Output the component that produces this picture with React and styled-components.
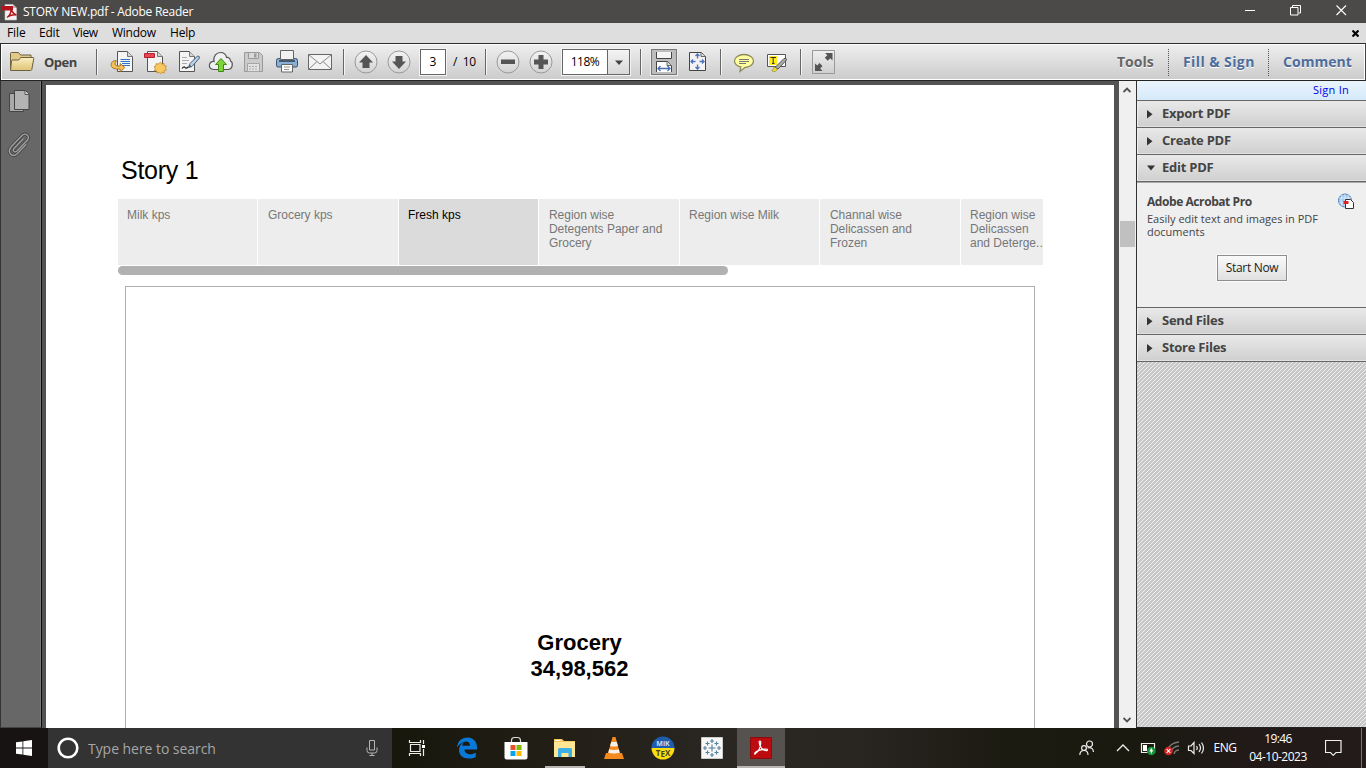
import React from "react";
import styled, { createGlobalStyle, css } from "styled-components";

const Global = createGlobalStyle`
  * { box-sizing: border-box; }
  body { margin: 0; overflow: hidden; font-family: "Open Sans", "Noto Sans", sans-serif; font-size: 12px; color: #000; }
  svg { display: block; flex: none; }
`;

const Window = styled.div`
  width: 1366px; height: 768px; display: flex; flex-direction: column; overflow: hidden; background: #535353;
`;
const Label = styled.span`
  white-space: nowrap;
  font-size: ${(p) => p.$size || 12}px;
  font-weight: ${(p) => p.$weight || 400};
  color: ${(p) => p.$color || "#000"};
  letter-spacing: ${(p) => p.$track || 0}px;
  line-height: ${(p) => p.$line || 16}px;
`;

/* title and menu */
const TitleBar = styled.header`
  height: 23px; flex: none; display: flex; align-items: center; background: #4b4a48; padding-left: 2px;
`;
const TitleText = styled(Label)`margin-left: 5px; flex: 1;`;
const WindowButtons = styled.div`display: flex; gap: 35px; padding-right: 19px; margin-top: -2px;`;
const MenuBar = styled.nav`
  height: 20px; flex: none; display: flex; align-items: center; background: #dedede; padding-left: 7px;
`;
const MenuItem = styled(Label)`width: ${(p) => p.$w}px;`;
const MenuClose = styled.div`margin-left: auto; padding-right: 7px;`;

/* toolbar */
const ToolBar = styled.div`
  height: 38px; flex: none; display: flex; align-items: center;
  border: 1px solid #2b2b2b; border-bottom: 1px solid #242424; border-right-color: #444;
  background: linear-gradient(#efefef, #cbcbcb); box-shadow: inset 0 0 0 1px #fff;
`;
const Slot = styled.div`
  margin-left: ${(p) => p.$gap || 0}px; width: ${(p) => p.$w}px; height: 26px; flex: none;
  display: flex; align-items: center;
`;
const Divider = styled.div`
  margin-left: ${(p) => p.$gap}px; width: 2px; height: 26px; flex: none; background: #666; border-right: 1px solid #f6f6f6;
`;
const DottedDivider = styled.div`
  width: 1px; height: 27px; flex: none; margin-left: ${(p) => p.$gap}px; border-left: 1px dotted #555;
`;
const PageBox = styled.div`
  margin-left: 9px; width: 26px; height: 26px; flex: none; background: #fff; border: 1px solid #666;
  display: flex; align-items: center; justify-content: center; box-shadow: 0 0 0 1px #f3f3f3;
`;
const ZoomBox = styled.div`
  margin-left: 9px; width: 68px; height: 26px; flex: none; display: flex; border: 1px solid #666; background: #fff;
  box-shadow: 0 0 0 1px #f3f3f3;
`;
const ZoomValue = styled.div`width: 45px; display: flex; align-items: center; justify-content: center; border-right: 1px solid #666;`;
const ZoomArrow = styled.div`
  flex: 1; display: flex; align-items: center; justify-content: center; background: linear-gradient(#f4f4f4, #d8d8d8);
`;
const PressedTool = styled.div`
  margin-left: 9px; width: 26px; height: 26px; flex: none; border: 1px solid #777; background: #bdbdbd; box-shadow: 0 0 0 1px #eee;
  display: flex; align-items: center; justify-content: center;
`;
const PaneLink = styled.div`
  margin-left: ${(p) => p.$gap}px; width: ${(p) => p.$w}px; flex: none; display: flex; align-items: center; height: 30px;
  text-shadow: 0 1px 0 #fff;
`;

/* body */
const Body = styled.main`flex: 1; min-height: 0; display: flex;`;
const NavPane = styled.aside`
  width: 42px; flex: none; display: flex; flex-direction: column; align-items: center; padding: 8px 5px 0 0; gap: 17px;
  background: #676767; border-left: 1px solid #333; border-right: 1px solid #0d0d0d; border-bottom: 1px solid #444;
  box-shadow: inset -1px 0 0 #7b7b7b;
`;
const Viewer = styled.section`width: 1077px; flex: none; padding: 4px 5px 0 4px; background: #535353;`;
const Page = styled.article`height: 100%; background: #fff; padding: 68px 71px 0 72px; overflow: hidden; font-family: "Liberation Sans", Arial, sans-serif;`;
const StoryTitle = styled.h1`margin: 0 0 0 3px; font-size: 25px; font-weight: 400; line-height: 34px; letter-spacing: -0.25px; color: #000;`;
const StoryTabs = styled.div`
  margin-top: 12px; height: 66px; width: 925px; display: grid;
  grid-template-columns: 139px 140px 139px 140px 139px 140px 82px; column-gap: 1px; overflow: hidden;
`;
const StoryTab = styled.div`
  background: ${(p) => (p.$active ? "#dbdbdb" : "#ededed")}; color: ${(p) => (p.$active ? "#000" : "#777")};
  padding: 9px 0 0 9px; font-size: 12px; line-height: 14px; white-space: pre;
  &:nth-child(even) { padding-left: 9.9px; }
`;
const StoryScroll = styled.div`margin-top: 1px; width: 610px; height: 9px; border-radius: 5px; background: #b1b1b1;`;
const Sheet = styled.div`
  margin: 11px 0 0 7px; width: 910px; height: 500px; border: 1px solid #b0b0b0; padding: 343px 1px 0 0;
  font-size: 22px; font-weight: 700; line-height: 26px; text-align: center;
`;
const ScrollTrack = styled.div`
  width: 17px; flex: none; background: #f0f0f0; display: flex; flex-direction: column; align-items: center;
  padding: 6px 1px 5px 0;
`;
const ScrollThumb = styled.div`width: 15px; height: 26px; margin-top: 128px; margin-bottom: auto; background: #c0c0c0;`;

/* task panel */
const TaskPanel = styled.aside`
  width: 230px; flex: none; display: flex; flex-direction: column; border-left: 1px solid #333; border-bottom: 1px solid #222;
  background: linear-gradient(135deg, #efefef 12.5%, #c8c8c8 12.5% 50%, #efefef 50% 62.5%, #c8c8c8 62.5%) 0 0 / 4px 4px;
`;
const SignIn = styled.div`
  height: 20px; flex: none; display: flex; align-items: center; justify-content: flex-end; padding: 0 17px 1px 0;
  background: linear-gradient(#e9f4fd, #d6eafa); border-bottom: 1px solid #666;
`;
const PanelHeader = styled.div`
  height: 27px; flex: none; display: flex; align-items: center; padding: 0 0 2px 8px; gap: 5px;
  background: linear-gradient(#e9e9e9, #cfcfcf); border-bottom: 1px solid #666; box-shadow: inset 1px 0 0 #efefef, inset 0 -1px 0 #e2e2e2;
  svg { margin-top: 1px; }
`;
const PanelBody = styled.div`
  height: 126px; flex: none; background: #efefef; border-top: 1px solid #aaa; border-bottom: 1px solid #666; padding: 10px 11px 0 10px;
  display: flex; flex-direction: column;
`;
const PromoHead = styled.div`display: flex; justify-content: space-between; height: 19px;`;
const PromoText = styled.div`font-size: 11px; line-height: 13px; color: #444; letter-spacing: 0; white-space: pre;`;
const StartButton = styled.button`
  width: 70px; height: 26px; margin: 17px 0 0 70px; padding: 0 0 2px; font: 12px "Open Sans", sans-serif; letter-spacing: -0.3px; color: #222;
  border: 1px solid #8e8e8e; border-radius: 0; background: linear-gradient(#fafafa, #e0e0e0); box-shadow: 0 0 0 1px #fafafa;
`;

/* taskbar */
const TaskBar = styled.footer`
  height: 40px; flex: none; display: flex; align-items: stretch;
  background: linear-gradient(90deg, #181313 0 48px, #17170c 392px, #201d14 520px, #2a2622 720px, #292521 860px, #1c1b12 1000px, #19190f 1140px, #211a19 1250px, #221b1a);
`;
const TaskCell = styled.div`
  width: ${(p) => p.$w || 49}px; flex: none; display: flex; align-items: center; justify-content: center;
  ${(p) => p.$open && css`background: linear-gradient(#b9b7b4, #b9b7b4) center bottom / 40px 2px no-repeat;`}
  ${(p) => p.$active && css`background: linear-gradient(#b9b7b4, #b9b7b4) center bottom / 100% 2px no-repeat #555250;`}
`;
const SearchBox = styled.div`
  width: 344px; flex: none; display: flex; align-items: center; background: #333; padding: 0 13px 0 8px;
`;
const SearchHint = styled(Label)`margin: 2px 0 0 8px; flex: 1;`;
const Tray = styled.div`margin-left: auto; display: flex; align-items: center; padding-right: 4px; border-right: 0;`;
const TrayItem = styled.div`margin-left: ${(p) => p.$gap || 0}px; width: ${(p) => p.$w}px; display: flex; flex: none; justify-content: center;`;
const Clock = styled.div`width: 66px; margin-left: 8px; display: flex; flex-direction: column; align-items: center;`;
const DesktopEdge = styled.div`width: 1px; height: 40px; margin-left: 20px; background: #77736f;`;

const Art = ({ w, h = 26, children }) => (
  <svg width={w} height={h} viewBox={`0 0 ${w} ${h}`} fill="none">{children}</svg>
);

const AppIcon = () => (
  <Art w={16} h={18}>
    <path d="M3 1.500h8l3.500 3.500v12H3z" fill="#f3f1f1" stroke="#c9c4c4" strokeWidth=".6" />
    <path d="M11 1.500 14.500 5H11z" fill="#b5b5b5" />
    <path d="M0 3h11v4.500H0z" fill="#b3141b" />
    <path d="M5 14.500c2-1.500 4-4.500 4-7.500 2 3 3.500 4.500 5.500 5-3-.6-6 .2-9 2" stroke="#b3141b" strokeWidth="1.400" />
  </Art>
);

const Folder = () => (
  <Art w={26} h={22}>
    <path d="M1.500 19V2.500q0-1 1-1h7l2 2.500h10.500v5" fill="#e2c987" stroke="#6b6142" />
    <path d="M1.500 19.500 2.500 10q.2-1 1.200-1h6l2-2.500h12.300q1 0 .8 1l-2 11q-.3 1-1.300 1z" fill="url(#folderFill)" stroke="#6b6142" />
    <defs><linearGradient id="folderFill" x2="0" y2="1"><stop stopColor="#faeebf" /><stop offset="1" stopColor="#e0c376" /></linearGradient></defs>
  </Art>
);
const Paper = ({ x = 0 }) => (
  <g transform={`translate(${x} 0)`}>
    <path d="M.5 2.500h10l5 5v15H.5z" fill="#f4f4f4" stroke="#555" />
    <path d="M10.500 2.500v5h5" fill="#d4d4d4" stroke="#777" />
  </g>
);
const ConvertIcon = () => (
  <Art w={24}>
    <Paper x={7} />
    <path d="M10.500 10.500h9.500M10.500 12.500h9.500M12 14.500h8M12 16.500h8" stroke="#2d73c8" />
    <path d="M5.500 11.500C2 12 .8 14 1.200 16.500c.5 2.800 4 3.800 9 3.600v3l4.500-4.600-4.500-4v2.600c-3.300 0-5.200-.3-5.200-2.200 0-1.200.6-2 1.300-3.200z" fill="#f5c355" stroke="#9c6a1c" strokeWidth=".9" />
  </Art>
);
const CreateIcon = () => (
  <Art w={25}>
    <Paper x={4} />
    <path d="M1.500 4.500h10v4h-10z" fill="#e84552" stroke="#b5222d" />
    <path d="m17.500 13.300 1.300 2 2.200-.9.200 2.200 2.200.5-1 2 1.200 1.700-2.200.8 0 2.200-2.300-.4-1.400 1.300-1.600-1.500-2.100.9-.3-2.200-2.300-.5.900-2.100-1.300-1.500 2-.9-.1-2.200 2.300.3z" fill="#f7c860" stroke="#c08a2e" strokeWidth=".8" />
  </Art>
);
const SignIcon = () => (
  <Art w={23}>
    <Paper x={1} />
    <path d="M4 8.500h5M4 11.500h7M4 14.500h5" stroke="#aaa" />
    <path d="M4 19.500q2-2.500 3-1t3-.5" stroke="#222" strokeWidth="1.200" />
    <path d="m10.500 18.500 1.500-4L19.500 7q2.300 0 2 2l-7.500 8.500z" fill="#b9d1e8" stroke="#4a6078" />
    <path d="M10 19 11.500 15.500 13.500 17.500z" fill="#566" />
  </Art>
);
const CloudIcon = () => (
  <Art w={26}>
    <path d="M6 20.500C2 20.500 1 18 1.500 15.500 2 13 4.500 12 6 12.500 5 7 8.500 3.500 12.500 3.500c3.500 0 5.500 2 6 5 2.500-.5 4 1.500 4 3.500 2.500 1 3 8.500-3 8.500z" fill="#f0f0f0" stroke="#555" strokeWidth="1.200" />
    <path d="m13 9.500 5.500 6H15.500v7h-5v-7H7.500z" fill="#7fd43c" stroke="#3f8a17" />
  </Art>
);
const FloppyIcon = () => (
  <Art w={21}>
    <path d="M1.500 3.500h15l3 3v16h-18z" fill="#cbcbcb" stroke="#999" />
    <path d="M5.500 3.500h10v6h-10z" fill="#d9d9d9" stroke="#999" />
    <path d="M11 4.500h2.500v4H11z" fill="#9b9b9b" />
    <path d="M4.500 14.500h12v8h-12z" fill="#e2e2e2" stroke="#a4a4a4" />
    <path d="M6 17.500h9M6 20h9" stroke="#aaa" strokeDasharray="2 1" />
  </Art>
);
const PrinterIcon = () => (
  <Art w={24}>
    <path d="M3.500 9.500h17q2 0 2 2v5q0 1.500-1.500 1.500H3q-1.500 0-1.500-1.500v-5q0-2 2-2z" fill="#8aafd4" stroke="#36506d" />
    <path d="M5.500 1.500h13v9h-13z" fill="#f2f2f2" stroke="#666" />
    <path d="M4 12h16" stroke="#2d3c4d" strokeWidth="1.500" />
    <path d="M6.500 15.500h11v7.500h-11z" fill="#fafafa" stroke="#666" />
    <path d="M9 18h6M9 20.500h5" stroke="#999" />
  </Art>
);
const MailIcon = () => (
  <Art w={26}>
    <path d="M1.500 5.500h23v15h-23z" fill="#f3f3f3" stroke="#666" />
    <path d="m2 6 11 9 11-9M2 20l8-7.500M24 20l-8-7.500" stroke="#888" />
  </Art>
);
const RoundTool = ({ children }) => (
  <Art w={24}>
    <circle cx="12" cy="13" r="11" fill="url(#roundFill)" stroke="#999" />
    <defs><linearGradient id="roundFill" x2="0" y2="1"><stop stopColor="#f4f4f4" /><stop offset="1" stopColor="#d2d2d2" /></linearGradient></defs>
    <g fill="#555">{children}</g>
  </Art>
);
const FitWidthIcon = () => (
  <Art w={24} h={24}>
    <path d="M4.500 2v6.500h15V2" fill="#f4f4f4" stroke="#444" />
    <path d="M4.500 22V11.500h11l4 4V22" fill="#fff" stroke="#444" />
    <path d="M15 11.500v4h4.500" fill="#ddd" stroke="#666" />
    <path d="M6 18.500h12M8.500 16 6 18.500 8.500 21M15.500 16l2.500 2.500-2.500 2.500" stroke="#4b6fb5" strokeWidth="1.300" />
  </Art>
);
const FitPageIcon = () => (
  <Art w={20}>
    <path d="M1.500 3.500h12l4 4v14h-16z" fill="#f3f3f3" stroke="#444" />
    <path d="M13 3.500v4h4.500" fill="#ddd" stroke="#666" />
    <path d="M9.500 5v4.500M9.500 15.500V20M3 12.500h4.500M11.500 12.500H16M7.500 7l2-2 2 2M7.500 18l2 2 2-2M5 10.500l-2 2 2 2M14 10.500l2 2-2 2" stroke="#4e74bd" strokeWidth="1.300" />
  </Art>
);
const CommentIcon = () => (
  <Art w={22}>
    <path d="M11 5.500c5.500 0 9.500 3 9.500 6.500s-4 6.500-8.500 6.500l-5 4 .8-4.500C4 17 1.500 15 1.500 12c0-3.500 4-6.500 9.500-6.500z" fill="#ffffa0" stroke="#8f8a5e" strokeWidth="1.300" />
    <path d="M6 10.500h10M6 12.500h10M6 14.500h7" stroke="#777" />
  </Art>
);
const HighlightIcon = () => (
  <Art w={24}>
    <path d="M1.500 5.500h18v12h-18z" fill="#fff" stroke="#555" />
    <path d="M3 7h8v9H3z" fill="#ffec1a" />
    <path d="M4.500 8.500h5.500M7.200 8.500V15M6 14.500h2.500" stroke="#333" />
    <path d="m9 18.500 9-9q2.500-1 2.500 1.500l-8.500 9z" fill="#aaa" stroke="#555" />
    <path d="m6 22 2.500-4 3 2.500-2.500 2z" fill="#f3e52c" stroke="#8f8628" strokeWidth=".7" />
  </Art>
);
const FullIcon = () => (
  <Art w={25}>
    <path d="M1.500 1.500h22v23h-22z" fill="url(#fullFill)" stroke="#999" />
    <defs><linearGradient id="fullFill" x2="0" y2="1"><stop stopColor="#f0f0f0" /><stop offset="1" stopColor="#cecece" /></linearGradient></defs>
    <path d="M14 4h7.500v7.500l-2.300-2.300-2.400 2.600-3-3L16.300 6.300zM4 14.500l2.300 2 2.200-2.500 3 3-2.300 2.500 2.300 2.500H4z" fill="#555" />
  </Art>
);

const Arrow = ({ open }) => (
  <Art w={12} h={10}>{open ? <path d="M2 2.500h8l-4 5z" fill="#333" /> : <path d="M2 1v8.500L7.500 5.200z" fill="#333" />}</Art>
);
const Section = ({ title, open }) => (
  <PanelHeader><Arrow open={open} /><Label $size={13} $weight={700} $color="#444" $track={-0.25}>{title}</Label></PanelHeader>
);

const TABS = [
  "Milk kps", "Grocery kps", "Fresh kps", "Region wise\nDetegents Paper and\nGrocery",
  "Region wise Milk", "Channal wise\nDelicassen and\nFrozen", "Region wise\nDelicassen\nand Deterge..",
];

export default function App() {
  return (
    <Window>
      <Global />
      <TitleBar>
        <AppIcon />
        <TitleText $color="#fff" $track={-0.27}>STORY NEW.pdf - Adobe Reader</TitleText>
        <WindowButtons>
          <Art w={11} h={11}><path d="M1 5.500h10" stroke="#fff" /></Art>
          <Art w={11} h={11}><path d="M.5 2.500h7.500v7.500H.5zM2.500 2.500v-2H10.500v7.500H8.500" stroke="#fff" /></Art>
          <Art w={11} h={11}><path d="m.5.500 9.500 9.500M10 .5.500 10" stroke="#fff" strokeWidth="1.100" /></Art>
        </WindowButtons>
      </TitleBar>
      <MenuBar>
        <MenuItem $w={32} $track={-0.1}>File</MenuItem>
        <MenuItem $w={34} $track={-0.2}>Edit</MenuItem>
        <MenuItem $w={39} $track={-0.4}>View</MenuItem>
        <MenuItem $w={58} $track={-0.25}>Window</MenuItem>
        <MenuItem $w={40} $track={-0.2}>Help</MenuItem>
        <MenuClose><Art w={7} h={7}><path d="m.5.500 6 6M6.500.500l-6 6" stroke="#000" strokeWidth="2.200" /></Art></MenuClose>
      </MenuBar>
      <ToolBar>
        <Slot $gap={8} $w={26}><Folder /></Slot>
        <Slot $gap={9} $w={43}><Label $size={13} $weight={700} $color="#444" $track={-0.5}>Open</Label></Slot>
        <Divider $gap={9} />
        <Slot $gap={12} $w={24}><ConvertIcon /></Slot>
        <Slot $gap={9} $w={25}><CreateIcon /></Slot>
        <Slot $gap={10} $w={23}><SignIcon /></Slot>
        <Slot $gap={7} $w={26}><CloudIcon /></Slot>
        <Slot $gap={9} $w={21}><FloppyIcon /></Slot>
        <Slot $gap={11} $w={24}><PrinterIcon /></Slot>
        <Slot $gap={8} $w={26}><MailIcon /></Slot>
        <Divider $gap={10} />
        <Slot $gap={9} $w={24}><RoundTool><path d="m12 6 7 7.500h-3.500V19h-7v-5.500H5z" /></RoundTool></Slot>
        <Slot $gap={9} $w={24}><RoundTool><path d="m12 20-7-7.500h3.500V7h7v5.500H19z" /></RoundTool></Slot>
        <PageBox><Label>3</Label></PageBox>
        <Slot $gap={7} $w={25}><Label $track={-0.3}>/&nbsp; 10</Label></Slot>
        <Divider $gap={7} />
        <Slot $gap={9} $w={24}><RoundTool><path d="M5 10.500h14v4.500H5z" /></RoundTool></Slot>
        <Slot $gap={9} $w={24}><RoundTool><path d="M5 10.500h4.500V6h5v4.500H19v5h-4.500V20h-5v-4.500H5z" /></RoundTool></Slot>
        <ZoomBox>
          <ZoomValue><Label $track={-0.5}>118%</Label></ZoomValue>
          <ZoomArrow><Art w={8} h={5}><path d="M0 .5h8L4 5z" fill="#444" /></Art></ZoomArrow>
        </ZoomBox>
        <Divider $gap={10} />
        <PressedTool><FitWidthIcon /></PressedTool>
        <Slot $gap={11} $w={20}><FitPageIcon /></Slot>
        <Divider $gap={12} />
        <Slot $gap={11} $w={22}><CommentIcon /></Slot>
        <Slot $gap={11} $w={24}><HighlightIcon /></Slot>
        <Divider $gap={10} />
        <Slot $gap={9} $w={25}><FullIcon /></Slot>
        <PaneLink $gap={281} $w={51}><Label $size={14} $weight={700} $color="#666">Tools</Label></PaneLink>
        <DottedDivider $gap={0} />
        <PaneLink $gap={14} $w={85}><Label $size={14} $weight={700} $color="#4e6d9b" $track={0.4}>Fill &amp; Sign</Label></PaneLink>
        <DottedDivider $gap={0} />
        <PaneLink $gap={14} $w={75}><Label $size={14} $weight={700} $color="#4e6d9b" $track={0.05}>Comment</Label></PaneLink>
      </ToolBar>
      <Body>
        <NavPane>
          <Art w={24} h={26}>
            <path d="M2.500 4.500h14v18h-14z" fill="#a9a9a9" stroke="#444" />
            <path d="M7.500 1.500h11l3.500 3.500v15.500H7.500z" fill="#b3b3b3" stroke="#444" />
            <path d="M18 2v3.500h4" fill="#ddd" stroke="#555" />
          </Art>
          <Art w={24} h={26}>
            <path d="M16.500 6.500 7 16.500q-1.500 2 0 3t3-.5L20.500 8q2-3-.5-5t-5 .5L4 15q-3 4-.5 7t6.500 0l9-9.500" stroke="#484848" strokeWidth="3.200" />
            <path d="M16.500 6.500 7 16.500q-1.500 2 0 3t3-.5L20.500 8q2-3-.5-5t-5 .5L4 15q-3 4-.5 7t6.500 0l9-9.500" stroke="#a2a2a2" strokeWidth="1.300" />
          </Art>
        </NavPane>
        <Viewer>
          <Page>
            <StoryTitle>Story 1</StoryTitle>
            <StoryTabs>{TABS.map((t, i) => <StoryTab key={t} $active={i === 2}>{t}</StoryTab>)}</StoryTabs>
            <StoryScroll />
            <Sheet>Grocery<br />34,98,562</Sheet>
          </Page>
        </Viewer>
        <ScrollTrack>
          <Art w={8} h={6}><path d="M.5 5 4 1.500 7.500 5" stroke="#505050" strokeWidth="1.800" /></Art>
          <ScrollThumb />
          <Art w={8} h={6}><path d="M.5 1 4 4.500 7.500 1" stroke="#505050" strokeWidth="1.800" /></Art>
        </ScrollTrack>
        <TaskPanel>
          <SignIn><Label $size={11} $color="#0000ee" $track={0.25}>Sign In</Label></SignIn>
          <Section title="Export PDF" />
          <Section title="Create PDF" />
          <Section title="Edit PDF" open />
          <PanelBody>
            <PromoHead>
              <Label $weight={700} $color="#444" $line={17} $track={-0.43}>Adobe Acrobat Pro</Label>
              <Art w={18} h={18}>
                <circle cx="8" cy="7.500" r="6.500" fill="#a5c8ed" stroke="#4c82bd" />
                <path d="M2 5h12M2 10h12M8 1v13M5 2q-2 5 0 11M11 2q2 5 0 11" stroke="#e8f3fd" strokeWidth=".7" />
                <path d="M8.500 6.500h5l3 3v6h-8z" fill="#fff" stroke="#333" />
                <path d="M6.500 8h5v3h-5z" fill="#d22" />
              </Art>
            </PromoHead>
            <PromoText>{"Easily edit text and images in PDF\ndocuments"}</PromoText>
            <StartButton>Start Now</StartButton>
          </PanelBody>
          <Section title="Send Files" />
          <Section title="Store Files" />
        </TaskPanel>
      </Body>
      <TaskBar>
        <TaskCell $w={48}>
          <Art w={16} h={16}><path d="M0 2.300 6.500 1.400v6.200H0zM7.300 1.300 16 0v7.600H7.300zM0 8.400h6.500v6.200L0 13.700zM7.300 8.400H16V16l-8.700-1.300z" fill="#fff" /></Art>
        </TaskCell>
        <SearchBox>
          <Art w={24} h={24}><circle cx="12" cy="12" r="9.300" stroke="#fff" strokeWidth="2.600" /></Art>
          <SearchHint $size={14} $color="#a6a6a6" $track={-0.05} $line={20}>Type here to search</SearchHint>
          <Art w={14} h={18}><path d="M4.500 1.500h5v9.500h-5zM2 8.500v3q0 2.500 2.500 2.500h5q2.500 0 2.500-2.500v-3M7 14v2.500M4.500 16.500h5" stroke="#b5b5b5" /></Art>
        </SearchBox>
        <TaskCell $w={48}>
          <Art w={18} h={18}><path d="M3.500 5.500h9.500v7H3.500zM2.500 1v2.500h11V1M2.500 17v-2.500h11V17M16.500 1v4M16.500 10v7" stroke="#eee" strokeWidth="1.200" /><path d="M15 6h3v3h-3z" fill="#fff" /></Art>
        </TaskCell>
        <TaskCell $w={54}>
          <Art w={22} h={24}><path d="M1 11.500C1.500 5 6 1.500 11.500 1.500c6 0 9.500 4.500 9.500 9.500v2.500H8.500c.2 3.300 2.700 4.700 5.800 4.700 2 0 3.800-.6 5.500-1.500v4.200c-2 1-4.300 1.600-7 1.600-6 0-9.800-3.200-9.800-8.500 0-3.700 2-6.300 5-7.800-1 1-1.500 2.200-1.700 3.600h7.700c0-2.800-1.500-4.300-4.300-4.300C6 6 3 8 1 11.500z" fill="#0a78d6" /></Art>
        </TaskCell>
        <TaskCell $w={44}>
          <Art w={24} h={24}>
            <path d="M7.500 6.500V4.500q0-3 3-3h3q3 0 3 3v2" stroke="#ddd" strokeWidth="1.200" /><path d="M.5 6h23v15.500q0 2-2 2h-19q-2 0-2-2z" fill="#fff" />
            <path d="M6.500 9h5v5h-5z" fill="#e8502c" /><path d="M12.500 9h5v5h-5z" fill="#7fba00" /><path d="M6.500 15h5v5h-5z" fill="#00a4ef" /><path d="M12.500 15h5v5h-5z" fill="#ffb900" />
          </Art>
        </TaskCell>
        <TaskCell $w={54} $open>
          <Art w={22} h={20}>
            <path d="M0 1h8l2 2h11v16H0z" fill="#f5ca5c" /><path d="M0 4h21v15H0z" fill="#ffe694" /><path d="M1.500 2h5v1h-5z" fill="#fff" />
            <path d="M4 19v-7.500q0-1.500 1.500-1.500h11q1.500 0 1.500 1.500V19h-3.500v-4h-7v4z" fill="#3cb0e5" />
          </Art>
        </TaskCell>
        <TaskCell $w={44}>
          <Art w={22} h={24}>
            <path d="M3 17h16l2 6H1z" fill="#f28a1f" /><path d="M9.500 1h3l5 18q-6.500 3-13 0z" fill="#f58a1d" /><path d="m8.200 6 5.600 0 1.100 4q-4 1.200-7.800 0zM6.200 13.300q4.800 1.500 9.600 0l1 3.500q-5.600 1.600-11.600 0z" fill="#f3efe9" />
          </Art>
        </TaskCell>
        <TaskCell $w={54}>
          <Art w={24} h={24}>
            <path d="M.5 12a11.500 11.500 0 0 1 23 0z" fill="#1d5dac" /><path d="M.5 12a11.500 11.500 0 0 0 23 0z" fill="#ffdc10" />
            <text x="12" y="10" textAnchor="middle" fontSize="7" fontWeight="700" fill="#c9dcf2" fontFamily="Open Sans">MiK</text>
            <text x="12" y="19.500" textAnchor="middle" fontSize="8" fontWeight="700" fill="#444122" fontFamily="Open Sans">T<tspan dy="1.500">E</tspan><tspan dy="-1.500">X</tspan></text>
          </Art>
        </TaskCell>
        <TaskCell $w={43}>
          <Art w={22} h={22}>
            <path d="M.5.500h21v21H.500z" fill="#f7f7f7" stroke="#ccc" />
            <path d="M11 7.500v7M7.500 11h7M11 2v4M9 4h4M11 16v4M9 18h4M4 9v4M2 11h4M18 9v4M16 11h4M6.500 4.500v4M4.500 6.500h4M15.500 4.500v4M13.500 6.500h4M6.500 13.500v4M4.500 15.500h4M15.500 13.500v4M13.500 15.500h4" stroke="#54809f" strokeWidth="1.100" />
          </Art>
        </TaskCell>
        <TaskCell $w={4} />
        <TaskCell $w={48} $active>
          <Art w={22} h={22}>
            <path d="M.5.500h21v21H.500z" fill="#bd0c10" stroke="#8c0b0d" />
            <path d="M5 17c3-2 5.500-7 5.800-11.500 0-1.800-1.800-1.800-1.600 0 .3 4 3 7.800 7 8.200 2 0 1.600-1.700-.2-1.700-4 0-8.500 1.500-11 3.800-.8 1 0 1.800 0 1.200" stroke="#fff" strokeWidth="1.200" />
          </Art>
        </TaskCell>
        <Tray>
          <TrayItem $w={16}>
            <Art w={16} h={16}><circle cx="10.500" cy="4" r="3" stroke="#eee" strokeWidth="1.200" /><circle cx="5" cy="8" r="2.400" stroke="#eee" strokeWidth="1.200" /><path d="M.8 15q.2-4.500 4.200-4.500T9 15M8.500 8q5.500-1.500 6 4" stroke="#eee" strokeWidth="1.200" /></Art>
          </TrayItem>
          <TrayItem $gap={21} $w={14}><Art w={14} h={8}><path d="m1 7 6-6 6 6" stroke="#eee" strokeWidth="1.300" /></Art></TrayItem>
          <TrayItem $gap={10} $w={16}>
            <Art w={16} h={16}><path d="M1.500 3.500h13v9h-13z" stroke="#eee" strokeWidth="1.200" /><path d="M3 5h4v6H3z" fill="#fff" /><circle cx="11.300" cy="11" r="4.300" fill="#179135" /><path d="m11.300 8 2 3.500h-1.500v2h-1v-2h-1.500z" fill="#fff" /></Art>
          </TrayItem>
          <TrayItem $gap={8} $w={16}>
            <Art w={16} h={16}><path d="M4 9Q6.500 3 15 2M7 12q1.500-5.500 8-6M10 14q1-4 5-4" stroke="#777" strokeWidth="1.400" /><circle cx="4.500" cy="11" r="4.300" fill="#d92424" /><path d="m2.700 9.200 3.600 3.600M6.300 9.200l-3.600 3.600" stroke="#fff" strokeWidth="1.100" /></Art>
          </TrayItem>
          <TrayItem $gap={7} $w={18}>
            <Art w={18} h={14}><path d="M1.500 5h2.500l3-3.500v11L4 9.500H1.500zM9.500 5q1.500 2 0 4M12 3q3 4 0 8M14.500 1.500q4 5.500 0 11" stroke="#eee" strokeWidth="1.200" /></Art>
          </TrayItem>
          <TrayItem $gap={8} $w={24}><Label $color="#fff" $track={-0.4}>ENG</Label></TrayItem>
          <Clock><Label $color="#fff" $track={-0.6} $line={18}>19:46</Label><Label $color="#fff" $track={-0.5} $line={18}>04-10-2023</Label></Clock>
          <TrayItem $gap={14} $w={16}><Art w={17} h={16}><path d="M.5.500h15.500v12h-5L8.200 15.300 5.500 12.500h-5z" stroke="#eee" strokeWidth="1.200" /></Art></TrayItem>
          <DesktopEdge />
        </Tray>
      </TaskBar>
    </Window>
  );
}
